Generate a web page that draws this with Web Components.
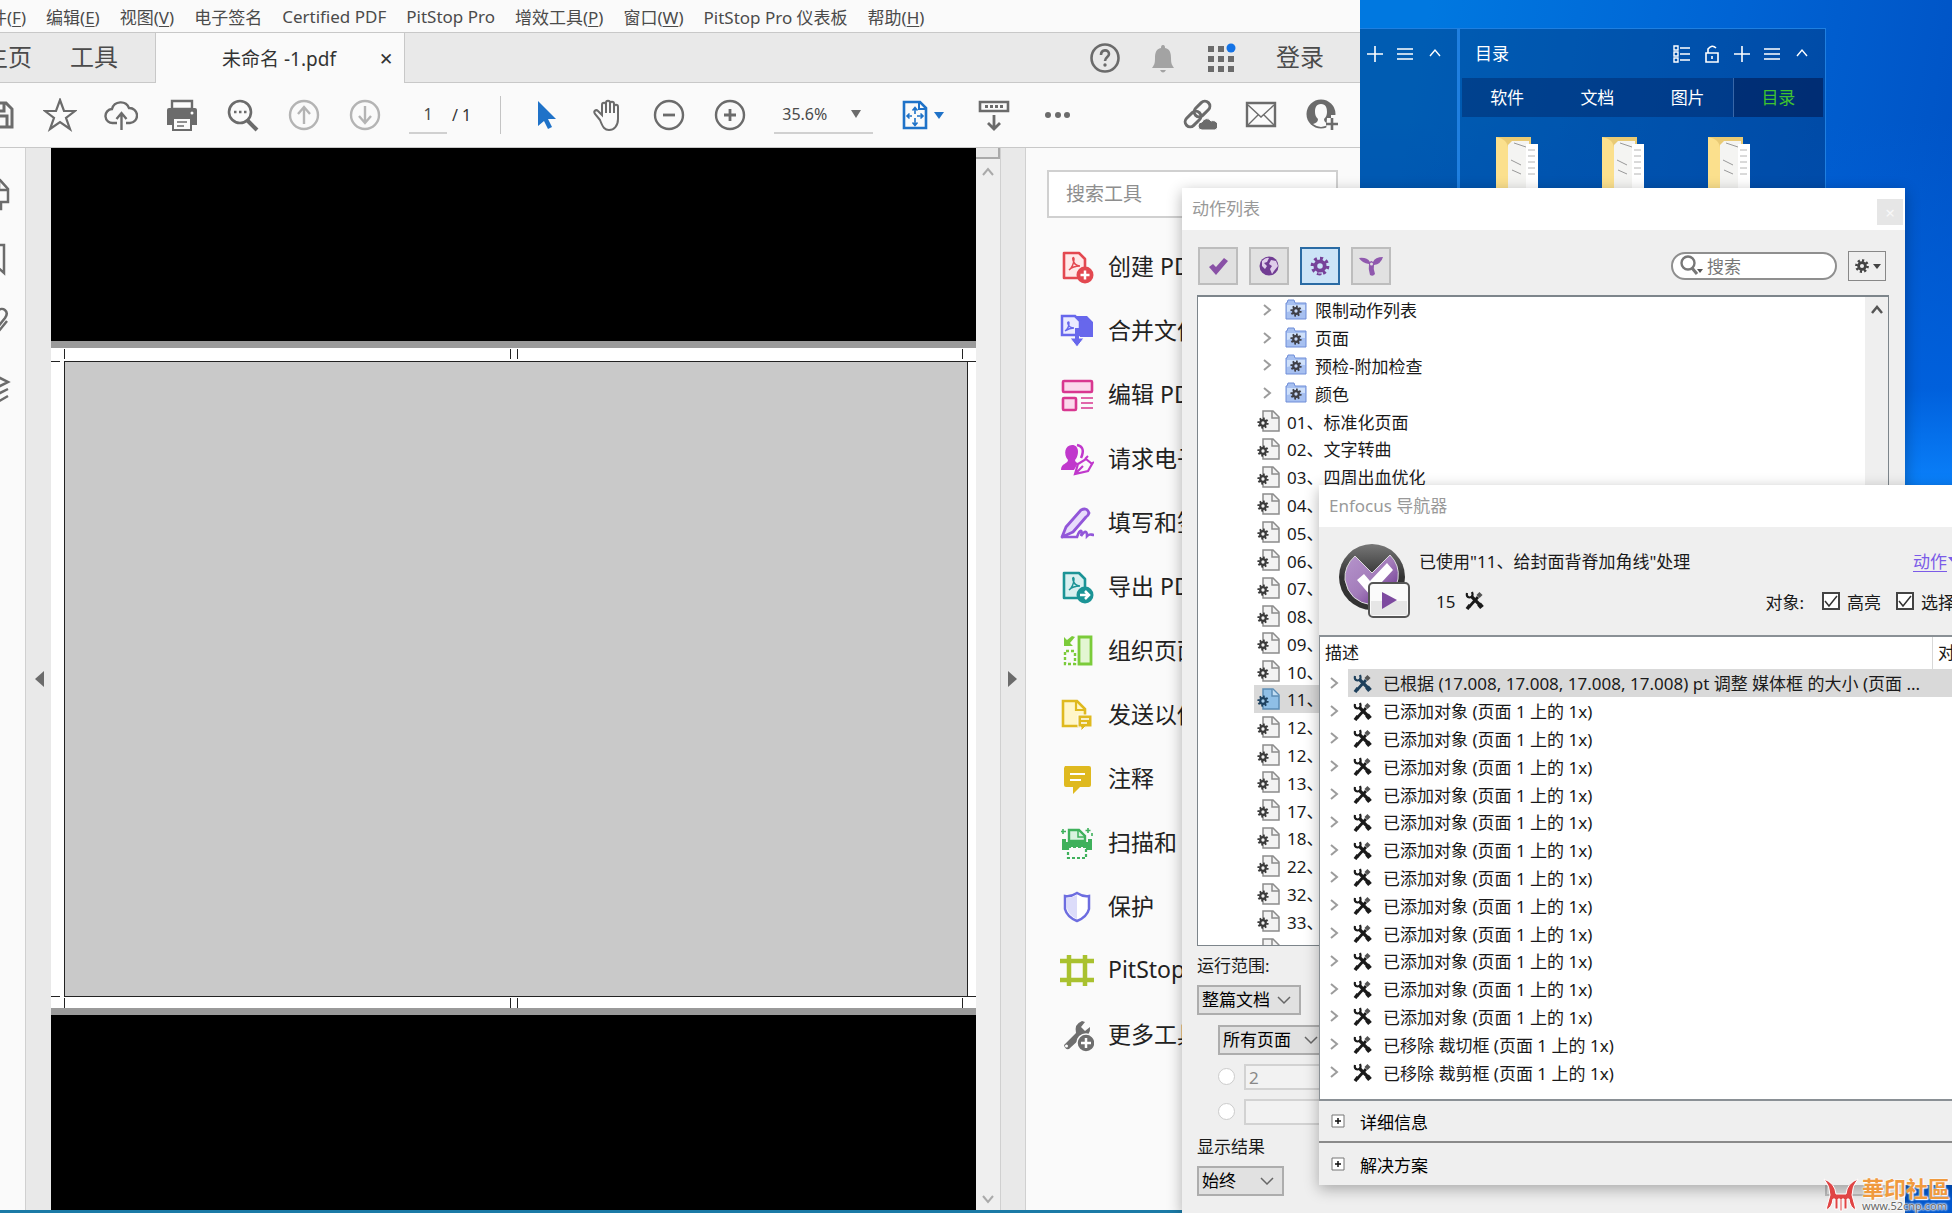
<!DOCTYPE html>
<html lang="zh-CN">
<head>
<meta charset="utf-8">
<title>未命名 -1.pdf</title>
<style>
    html, body {
        margin: 0;
        height: 100%;
        overflow: hidden;
        font-family: "Noto Sans", "Noto Sans CJK SC", sans-serif;
    }
</style>
</head>
<body>
<desk-top>
    <desktop-panel slot="panel"></desktop-panel>
    <acrobat-window slot="main"></acrobat-window>
    <float-window slot="actions">
        <span slot="title">动作列表</span>
        <action-list></action-list>
    </float-window>
    <float-window slot="navigator">
        <span slot="title">Enfocus 导航器</span>
        <enfocus-navigator></enfocus-navigator>
    </float-window>
    <site-mark slot="mark"></site-mark>
</desk-top>

<script>
    // Base: every element renders its template once into an open root
    class BaseElement extends HTMLElement {
        constructor() {
            super();
            this.attachShadow({mode: 'open'});
        }

        connectedCallback() {
            this.shadowRoot.innerHTML = this.render();
        }
    }

    const gear = (x, y, r, color, hole) => `
        <circle cx="${x}" cy="${y}" r="${r}" pathLength="16" fill="none" stroke="${color}" stroke-width="${r * .5}" stroke-dasharray="1 1"/>
        <circle cx="${x}" cy="${y}" r="${r * .62}" fill="${hole}" stroke="${color}" stroke-width="${r * .5}"/>`;

    const acro = color => `<path d="M9 20c3-2 5-7 5-11 0-2-2-2-1 1 1 4 4 6 7 6-4 0-8 1-11 4z" fill="none" stroke="${color}" stroke-width="1.5"/>`;

    // name: [width, height, markup]
    const ICONS = {
        save: [34, 34, '<path d="M4 5h20l6 6v18H4z M10 5v8h12V5 M9 29V18h16v11" fill="none" stroke="#6b6b6b" stroke-width="3"/>'],
        star: [34, 34, '<path d="M17 2l4 11h11l-9 7 4 11-10-7-10 7 4-11-9-7h11z" fill="none" stroke="#6b6b6b" stroke-width="2.2"/>'],
        cloud: [34, 34, '<path d="M13 25H9a7 7 0 0 1-1-14 9 9 0 0 1 17-1 7.500 7.500 0 0 1 1 15h-4" fill="none" stroke="#6b6b6b" stroke-width="2.400"/><path d="M17.500 32V16m-5 5 5-6 5 6" fill="none" stroke="#6b6b6b" stroke-width="2.400"/>'],
        print: [34, 34, '<path d="M7 3h20v8H7z" fill="#fafafa" stroke="#6b6b6b" stroke-width="2.400"/><path d="M2 12q0-2 2-2h26q2 0 2 2v15H2z" fill="#6b6b6b"/><path d="M8 20h18v12H8z" fill="#fafafa" stroke="#6b6b6b" stroke-width="2"/><path d="M12 24h10m-10 4h7" stroke="#6b6b6b" stroke-width="1.500"/><circle cx="27" cy="15" r="1.500" fill="#fff"/>'],
        find: [34, 34, '<circle cx="14" cy="14" r="11" fill="none" stroke="#6b6b6b" stroke-width="2.600"/><path d="M21 22l10 10" stroke="#6b6b6b" stroke-width="4"/><path d="M8 14h2.500m2.500 0h2.500m2.500 0h2.500" stroke="#6b6b6b" stroke-width="2.500"/>'],
        up: [34, 34, '<circle cx="17" cy="17" r="14" fill="none" stroke="#b4b4b4" stroke-width="2.400"/><path d="M17 26V10m-6 6 6-7 6 7" fill="none" stroke="#b4b4b4" stroke-width="2.400"/>'],
        down: [34, 34, '<circle cx="17" cy="17" r="14" fill="none" stroke="#b4b4b4" stroke-width="2.400"/><path d="M17 8v16m-6-6 6 7 6-7" fill="none" stroke="#b4b4b4" stroke-width="2.400"/>'],
        pointer: [34, 34, '<path d="M8 3v25l6-5 4 8 4-2-4-8h8z" fill="#1f72c8"/>'],
        hand: [34, 34, '<path d="M9 22L4 16c-2-3 1-5 3-3l4 4V7c0-3 4-3 4 0V5c0-3 4-3 4 0v1c0-3 4-3 4 0v3c0-3 4-3 4 0v12c0 7-4 11-9 11-4 0-6-2-9-10z M15 7v8m4-9v9m4-7v7" fill="none" stroke="#6b6b6b" stroke-width="2"/>'],
        minus: [34, 34, '<circle cx="17" cy="17" r="14" fill="none" stroke="#6b6b6b" stroke-width="2.400"/><path d="M11 17h12" stroke="#6b6b6b" stroke-width="2.800"/>'],
        plus: [34, 34, '<circle cx="17" cy="17" r="14" fill="none" stroke="#6b6b6b" stroke-width="2.400"/><path d="M11 17h12M17 11v12" stroke="#6b6b6b" stroke-width="2.800"/>'],
        fit: [48, 34, '<path d="M4 4h16l6 6v20H4z" fill="none" stroke="#1f72c8" stroke-width="2.600"/><path d="M19 3v8h8" fill="none" stroke="#1f72c8" stroke-width="2"/><path d="M15 11v5m0 4v6M7 18h5m5 0h6M12.500 12.500 15 9.500l2.500 3M12.500 24.500l2.500 3 2.500-3M9.500 15.500 7 18l2.500 2.500M20.500 15.500 23 18l-2.500 2.500" fill="none" stroke="#1f72c8" stroke-width="1.600"/><path d="M34 14h10l-5 7z" fill="#1f72c8"/>'],
        ruler: [38, 34, '<path d="M5 4h28v9H5z" fill="none" stroke="#6b6b6b" stroke-width="2.600"/><path d="M10 8.500h3m2 0h3m2 0h3m2 0h3" stroke="#6b6b6b" stroke-width="3"/><path d="M19 17v13m-6-5 6 6 6-6" fill="none" stroke="#6b6b6b" stroke-width="2.800"/>'],
        dots: [34, 34, '<g fill="#6b6b6b"><circle cx="8" cy="17" r="3"/><circle cx="18" cy="17" r="3"/><circle cx="27" cy="17" r="3"/></g>'],
        link: [34, 34, '<g fill="none" stroke="#6b6b6b" stroke-width="3"><rect x="10" y="6" width="18" height="10" rx="5" transform="rotate(-45 19 11)"/><rect x="1" y="16" width="18" height="10" rx="5" transform="rotate(-45 10 21)"/></g><path d="M19 32a4 4 0 0 1 0-8 5 5 0 0 1 9-1 4.500 4.500 0 0 1 4 9z" fill="#6b6b6b" stroke="#fafafa"/>'],
        mail: [34, 34, '<path d="M3 5h28v23H3z" fill="none" stroke="#6b6b6b" stroke-width="2.400"/><path d="M4 7l13 12L30 7M4 27l10-10m16 10L20 17" fill="none" stroke="#6b6b6b" stroke-width="1.400"/>'],
        user: [34, 34, '<circle cx="16" cy="16" r="14.500" fill="#6b6b6b"/><path d="M16 6c-5 0-6 4-6 8 0 3 1 5 3 7 0 3-2 4-5 5q8 6 16 0c-3-1-5-2-5-5 2-2 3-4 3-7 0-4-1-8-6-8z" fill="#fafafa"/><path d="M22 20h4v-3h9v17H21z" fill="#fafafa"/><path d="M27 20v12m-6-6h12" stroke="#6b6b6b" stroke-width="2.600"/>'],
        help: [34, 34, '<circle cx="17" cy="17" r="13.500" fill="none" stroke="#6b6b6b" stroke-width="2.600"/><path d="M13 14c0-6 8-6 8-1 0 3-4 3-4 7" fill="none" stroke="#6b6b6b" stroke-width="2.600"/><circle cx="17" cy="24" r="1.700" fill="#6b6b6b"/>'],
        bell: [34, 34, '<path d="M17 4c-2 0-2 2-2 3-5 1-6 5-6 10 0 6-1 7-3 10h22c-2-3-3-4-3-10 0-5-1-9-6-10 0-1 0-3-2-3zM14 29h6q-3 5-6 0z" fill="#a3a3a3"/>'],
        grid: [34, 34, '<g fill="#6b6b6b"><path d="M4 5h6v6H4zM14 5h6v6h-6zM4 15h6v6H4zM14 15h6v6h-6zM24 15h6v6h-6zM4 25h6v6H4zM14 25h6v6h-6zM24 25h6v6h-6z"/></g><circle cx="27" cy="7" r="4.500" fill="#1473e6"/>'],
        pages: [34, 34, '<path d="M5 3h15l8 9v13H21v7H5z" fill="none" stroke="#6b6b6b" stroke-width="2.500"/><path d="M19 3v10h9" fill="none" stroke="#6b6b6b" stroke-width="2.500"/>'],
        bookmark: [34, 34, '<path d="M6 3h18v28l-9-8-9 8z" fill="none" stroke="#6b6b6b" stroke-width="2.500"/>'],
        clip: [34, 34, '<path d="M8 22L18 4c4-5 12 0 7 7L13 26M27 14 14 30" fill="none" stroke="#6b6b6b" stroke-width="2.500"/>'],
        layers: [34, 34, '<path d="M16 4 4 10l12 6 12-6zM28 17l-12 6-12-6M28 24l-12 7-12-7" fill="none" stroke="#6b6b6b" stroke-width="2.500"/>'],
        // right-hand tool list
        create: [34, 34, `<path d="M4 3h15l6 6v19H4z" fill="#ffe9e9" stroke="#e34850" stroke-width="2.600" stroke-linejoin="round"/>${acro('#e34850')}<circle cx="25" cy="25" r="8.500" fill="#e34850"/><path d="M20.500 25h9M25 20.500v9" stroke="#fff" stroke-width="2.500"/>`],
        merge: [34, 34, `<path d="M16 2h11l6 6v15H20V12z" fill="#6767ec"/><path d="M2 2h13l5 5v14H2z" fill="#eaeaff" stroke="#6767ec" stroke-width="2.500"/><path d="M5 17c3-2 4-6 4-8 0-2-2-1-1 1 1 3 4 4 6 4-4 0-6 1-9 3z" fill="none" stroke="#6767ec" stroke-width="1.400"/><path d="M17 15v11m-7-2h14l-7 9z" fill="#6767ec" stroke="#fafafa" stroke-width="1"/><path d="M15 14h4v12h-4z" fill="#6767ec"/>`],
        edit: [34, 34, '<g fill="#fbd8ec" stroke="#d83790" stroke-width="2.600"><rect x="3" y="3" width="29" height="11" rx="1"/><rect x="3" y="20" width="13" height="12" rx="1"/></g><path d="M21 20h12m-12 5h12m-12 5h12" stroke="#d83790" stroke-width="1.400"/>'],
        sign: [34, 34, '<path d="M1 28c0-7 7-6 7-10-5-6-3-15 4-15 8 0 7 11 3 15 0 2 2 3 3 3l-4 7z" fill="#c038cc"/><path d="M17 3q9 2 4 13" fill="none" stroke="#c038cc" stroke-width="2.500"/><path d="M15 32l3-10 8-5 6 5-4 7z M16 31l7-7" fill="#fafafa" stroke="#c038cc" stroke-width="2.200"/><path d="M25 17l3-3m3 8 3-2" stroke="#c038cc" stroke-width="2"/>'],
        fill: [34, 34, '<path d="M2 31l4-10L21 4q6-3 8 3-1 3-3 4L13 26z" fill="#e8dcfb" stroke="#9256d9" stroke-width="2.800" stroke-linejoin="round"/><path d="M2 31h15c3-9 6-7 4-1 4-6 6-5 6 0 3-3 4-1 7-1" fill="none" stroke="#9256d9" stroke-width="2.600"/>'],
        export: [34, 34, `<path d="M4 3h15l6 6v19H4z" fill="#d9f0f0" stroke="#1b9496" stroke-width="2.600" stroke-linejoin="round"/>${acro('#1b9496')}<circle cx="25" cy="25" r="8.500" fill="#1b9496"/><path d="M20 25h9m-4-4 4 4-4 4" fill="none" stroke="#fff" stroke-width="2.500"/>`],
        organize: [34, 34, '<path d="M19 3h12v27H19z" fill="#e3f6d3" stroke="#7bcb3a" stroke-width="2.800"/><path d="M14 17H5v13h10V17" fill="none" stroke="#7bcb3a" stroke-width="2.400" stroke-dasharray="3 2"/><path d="M4 3v9h9L10 9l5-6-3-1-5 4z" fill="#7bcb3a"/>'],
        send: [34, 34, '<path d="M3 3h14l8 8v17H3z" fill="#fff6c8" stroke="#dfb91f" stroke-width="2.600"/><path d="M16 3v9h9" fill="none" stroke="#dfb91f" stroke-width="2.200"/><path d="M18 17h14v12h-7l-4 4v-4h-3z" fill="#dfb91f" stroke="#fafafa"/><path d="M21 21h8m-8 4h6" stroke="#fff" stroke-width="1.500"/>'],
        comment: [34, 34, '<path d="M5 4h24q2 0 2 2v17q0 2-2 2H20l-7 7v-7H6q-2 0-2-2V6z" fill="#dfb91f"/><path d="M10 12h15m-15 6h11" stroke="#fff" stroke-width="2"/>'],
        scan: [34, 34, '<path d="M2 13h4v3h22v-3h4v11H2z" fill="#3fb15c"/><path d="M9 15V4h10l6 6v5z" fill="#d9f3df" stroke="#3fb15c" stroke-width="2.400"/><path d="M18 4v7h7" fill="none" stroke="#3fb15c" stroke-width="1.500"/><path d="M8 21h18v11H8z" fill="#fafafa" stroke="#3fb15c" stroke-width="2.200" stroke-dasharray="3 2"/><path d="M3 3v5M1 5.500h5M28 2v5m-2.500-2.500h5M32 7v3" stroke="#3fb15c" stroke-width="1.600"/>'],
        shield: [34, 34, '<path d="M17 3q6 4 12 3v13q-2 8-12 12Q7 27 5 19V6q6 1 12-3z" fill="#fff" stroke="#6d6de0" stroke-width="2.500"/><path d="M17 5v24Q8 25 7 18V8q5 0 10-3z" fill="#dcdcfa"/>'],
        pitstop: [34, 34, '<path d="M9 1v31M25 1v31M0 7h34M0 26h34" stroke="#a9c12f" stroke-width="4.500"/>'],
        more: [34, 34, '<path d="M4 27 16 15q-2-9 6-12l3 1-4 5 4 4 5-4q1 9-8 10L9 31q-4 1-5-4z" fill="#6e6e6e"/><circle cx="6.500" cy="28" r="1.500" fill="#fff"/><circle cx="26" cy="25" r="9" fill="#6e6e6e" stroke="#fafafa" stroke-width="1.500"/><path d="M21 25h10M26 20v10" stroke="#fff" stroke-width="2.500"/>'],
        // PitStop windows
        check: [22, 22, '<path d="M2 12l4-3 3 3 8-9 4 3L9 20z" fill="#8951a6"/>'],
        globe: [22, 22, '<circle cx="11" cy="11" r="9.500" fill="#713c93"/><path d="M4 6q4-4 7-3l-2 4-3 1 3 3-2 3-3-3zM13 5l5 1 2 5-4 5-2 3-2-5 2-3-3-2z" fill="#dfcdea"/>'],
        cog: [22, 22, gear(11, 11, 7.5, '#77429a', '#cce4f7')],
        fan: [26, 22, '<path d="M11 9Q4 8 1 3q8-1 11 4 1-2 3 0 2-5 10-5-2 7-9 8-1 4 1 9-2 3-5 1-2-6-1-11z" fill="#9059ae"/><circle cx="13.500" cy="9" r="1.500" fill="#e1e1e1"/>'],
        smallgear: [16, 16, gear(8, 8, 5.5, '#444', '#efefef')],
        lens: [24, 24, '<circle cx="9" cy="9" r="6.500" fill="none" stroke="#777" stroke-width="2.400"/><path d="M13 14l5 6" stroke="#777" stroke-width="3"/><path d="M18 15h6l-3 4z" fill="#555"/>'],
        folder: [22, 22, `<path d="M1 4h1l1-3h6l1 3h11v16H1z" fill="#a7c0f0" stroke="#6f8dd8"/><path d="M2 6h18v5q-8-1-18 2z" fill="#cfe0fa"/>${gear(11, 12, 4.5, '#3f3f46', '#c5d6f6')}`],
        file: [24, 24, `<path d="M6 2h10l6 6v14H6z" fill="#f3f3f3" stroke="#8c8c8c" stroke-width="1.500"/><path d="M15 2v7h7" fill="none" stroke="#8c8c8c" stroke-width="1.500"/>${gear(6, 14, 4.5, '#3a3a3a', '#eee')}`],
        fileOn: [24, 24, `<path d="M6 2h10l6 6v14H6z" fill="#8fbfe6" stroke="#5c8db5" stroke-width="1.500"/><path d="M15 2v7h7" fill="#c2def4" stroke="#5c8db5" stroke-width="1.500"/>${gear(6, 14, 4.5, '#1d415f', '#a9cdea')}`],
        chevron: [12, 16, '<path d="M3 3l6 5-6 5" fill="none" stroke="#9c9c9c" stroke-width="2"/>'],
        tools: [20, 20, '<g stroke="currentColor" fill="none"><path d="M16 3.500l-3 3" stroke-width="4.500" stroke="#555"/><path d="M13 7L4 17" stroke-width="2.800"/><path d="M5 15l-3 4" stroke-width="3.500"/><path d="M6 6l9 9" stroke-width="3.200"/><path d="M14 14l3 3.500" stroke-width="4.800"/><path d="M2 3q-1 4 2.500 4.500Q9 7 7 2" stroke-width="2.200"/></g>'],
        list: [18, 18, '<path d="M1 1h4v4H1zM1 7h4v4H1zM1 13h4v4H1zM7 3h10M7 9h10M7 15h10" fill="none" stroke="#fff" stroke-width="1.400"/>'],
        lock: [18, 18, '<path d="M3 8h12v9H3zM5 8V4q4-5 8-1M9 11v3" fill="none" stroke="#fff" stroke-width="1.600"/>'],
        add: [18, 18, '<path d="M1 9h16M9 1v16" stroke="#fff" stroke-width="1.600"/>'],
        lines: [18, 18, '<path d="M1 4h16M1 9h16M1 14h16" stroke="#fff" stroke-width="1.600"/>'],
        caret: [18, 18, '<path d="M4 11l5-6 5 6" fill="none" stroke="#fff" stroke-width="1.400"/>'],
        docs: [46, 60, '<path d="M2 1h35v59H2z" fill="#e9ca74"/><path d="M14 9l4-4h17v55H14z" fill="#f4f4f2"/><path d="M32 8h12v52H32z" fill="#fff"/><path d="M34 14h7m-7 6h7m-7 6h7m-7 6h7m-7 6h7" stroke="#b4b4b4"/><path d="M17 24l10 5m-9 5 9 4m-7-31 12 4" stroke="#999"/><path d="M2 1q12 2 12 12v47Q8 58 2 53z" fill="#fbe08d"/>'],
        navigator: [72, 76, `
            <defs>
                <linearGradient id="ring" x2="0" y2="1"><stop offset="0" stop-color="#777"/><stop offset=".5" stop-color="#333"/></linearGradient>
                <linearGradient id="violet" x2="1" y2="1"><stop offset="0" stop-color="#b695cc"/><stop offset=".5" stop-color="#a37cba"/><stop offset="1" stop-color="#5e2286"/></linearGradient>
            </defs>
            <circle cx="34" cy="34" r="33" fill="url(#ring)"/>
            <path d="M17 13l17 17 18-18q10 10 8 24-3 21-26 26Q11 59 7 37 6 23 17 13z" fill="url(#violet)" stroke="#ddd"/>
            <path d="M19 37l7-6 6 7 17-18 6 7-23 25z" fill="#fff"/>
            <rect x="31" y="40" width="40" height="34" rx="4" fill="#fafafa" stroke="#555" stroke-width="2"/>
            <path d="M33 58h36v14H33z" fill="#e6e6e6"/>
            <path d="M44 49l15 8-15 9z" fill="#7d4a9f"/>`],
        logo: [36, 36, '<path d="M1 2q11 4 12 15h10Q24 6 35 2q-6 7-6 16l4 15q-6-2-7-11h-2v10h-3V22h-2v12h-2V22h-2v10h-3V22h-2q-1 9-7 11l4-15Q7 9 1 2z" fill="#e04545" stroke="#fff"/>']
    };

    class UiIcon extends BaseElement {
        render() {
            const [w, h, body] = ICONS[this.getAttribute('name')];
            return /* html */ `
                <style>
                    :host { display: block; flex: none; width: ${w}px; height: ${h}px; }
                    svg { display: block; }
                </style>
                <svg width="${w}" height="${h}" viewBox="0 0 ${w} ${h}" aria-hidden="true">${body}</svg>
            `;
        }
    }

    class DeskTop extends BaseElement {
        render() {
            return /* html */ `
                <style>
                    :host {
                        display: block;
                        position: relative;
                        height: 100vh;
                        overflow: hidden;
                        background: linear-gradient(to bottom, transparent 10%, #0060dc 32%, #0a80fa 40%, #0058d0 90%),
                            linear-gradient(100deg, #0078e0 66%, #0064d4 80%, #0048bc);
                    }
                    ::slotted(*) { position: absolute; }
                    ::slotted([slot=panel]) { top: 28px; right: 126px; }
                    ::slotted([slot=main]) { top: 0; left: -32px; right: 592px; bottom: 3px; }
                    ::slotted([slot=actions]) { top: 188px; right: 47px; bottom: 0; width: 723px; }
                    ::slotted([slot=navigator]) { top: 485px; right: -40px; bottom: 28px; width: 673px; }
                    ::slotted([slot=mark]) { right: 2px; bottom: 0; }
                    .taskbar { position: absolute; left: 0; right: 592px; bottom: 0; height: 3px; background: #1b7aa6; }
                </style>
                <slot name="panel"></slot>
                <div class="taskbar"></div>
                <slot name="main"></slot>
                <slot name="actions"></slot>
                <slot name="navigator"></slot>
                <slot name="mark"></slot>
            `;
        }
    }

    class DesktopPanel extends BaseElement {
        render() {
            const tool = name => `<button aria-label="${name}"><ui-icon name="${name}"></ui-icon></button>`;
            return /* html */ `
                <style>
                    :host { display: flex; color: #fff; font-size: 17px; }
                    section {
                        box-sizing: border-box;
                        height: 300px;
                        border: 1px solid #1f7fe0;
                        background: rgba(0, 50, 110, .4);
                    }
                    .side { width: 140px; border-right-width: 2px; }
                    .main { width: 367px; padding: 0 2px; }
                    header { display: flex; align-items: center; gap: 12px; height: 49px; padding: 0 13px; }
                    .side header { justify-content: flex-end; }
                    .main header { padding-right: 12px; }
                    h2 { margin: 0 auto 0 0; padding-bottom: 3px; font-size: 17px; font-weight: 400; }
                    button { padding: 0; border: 0; background: none; color: inherit; font: inherit; }
                    nav { display: grid; grid-template-columns: repeat(4, 1fr); height: 39px; background: rgba(0, 30, 90, .4); }
                    nav button { padding-bottom: 3px; }
                    nav button[aria-current] { border-left: 1px solid #3867a8; background: rgba(0, 20, 70, .3); color: #3fc32f; }
                    .files { display: flex; gap: 60px; padding: 19px 32px; }
                </style>
                <section class="side"><header>${['add', 'lines', 'caret'].map(tool).join('')}</header></section>
                <section class="main">
                    <header><h2>目录</h2>${['list', 'lock', 'add', 'lines', 'caret'].map(tool).join('')}</header>
                    <nav><button>软件</button><button>文档</button><button>图片</button><button aria-current="page">目录</button></nav>
                    <div class="files">${'<ui-icon name="docs"></ui-icon>'.repeat(3)}</div>
                </section>
            `;
        }
    }

    class AcrobatWindow extends BaseElement {
        render() {
            return /* html */ `
                <style>
                    :host { display: flex; flex-direction: column; background: #fafafa; color: #4b4b4b; }
                    .work { flex: 1; min-height: 0; display: flex; }
                    doc-view { flex: 1; }
                </style>
                <menu-bar></menu-bar>
                <tab-bar></tab-bar>
                <tool-bar></tool-bar>
                <div class="work">
                    <side-rail></side-rail>
                    <doc-view></doc-view>
                    <tools-pane></tools-pane>
                </div>
            `;
        }
    }

    class MenuBar extends BaseElement {
        render() {
            const items = ['文件(<u>F</u>)', '编辑(<u>E</u>)', '视图(<u>V</u>)', '电子签名', 'Certified PDF', 'PitStop Pro',
                '增效工具(<u>P</u>)', '窗口(<u>W</u>)', 'PitStop Pro 仪表板', '帮助(<u>H</u>)'];
            return /* html */ `
                <style>
                    :host { display: flex; gap: 20px; height: 32px; padding-left: 5px; box-sizing: border-box; font-size: 17px; }
                    button { padding: 0; border: 0; background: none; color: inherit; font: inherit; white-space: nowrap; }
                    u { text-underline-offset: 2px; }
                </style>
                ${items.map(item => `<button>${item}</button>`).join('')}
            `;
        }
    }

    class TabBar extends BaseElement {
        render() {
            return /* html */ `
                <style>
                    :host { display: flex; height: 51px; box-sizing: border-box; border-top: 1px solid #c8c8c8; background: #e9e9e9; font-size: 24px; }
                    button { padding: 0; border: 0; background: none; color: inherit; font: inherit; }
                    .home { display: flex; gap: 38px; width: 187px; padding: 0 0 4px 16px; box-sizing: border-box; border-bottom: 1px solid #c8c8c8; }
                    .tab {
                        display: flex;
                        align-items: center;
                        width: 250px;
                        padding: 0 11px 0 66px;
                        box-sizing: border-box;
                        justify-content: space-between;
                        border: solid #c8c8c8;
                        border-width: 0 1px;
                        background: #fafafa;
                        color: #333;
                        font-size: 19px;
                    }
                    .tab button { font-size: 17px; }
                    .right { flex: 1; display: flex; align-items: center; justify-content: flex-end; gap: 24px; padding-right: 36px; border-bottom: 1px solid #c8c8c8; }
                    .login { padding: 0 0 4px 14px; }
                </style>
                <div class="home"><button>主页</button><button>工具</button></div>
                <div class="tab"><span>未命名 -1.pdf</span><button aria-label="关闭">✕</button></div>
                <div class="right">
                    <button aria-label="帮助"><ui-icon name="help"></ui-icon></button>
                    <button aria-label="通知"><ui-icon name="bell"></ui-icon></button>
                    <button aria-label="应用"><ui-icon name="grid"></ui-icon></button>
                    <button class="login">登录</button>
                </div>
            `;
        }
    }

    class ToolBar extends BaseElement {
        render() {
            const tool = name => `<button aria-label="${name}"><ui-icon name="${name}"></ui-icon></button>`;
            return /* html */ `
                <style>
                    :host {
                        display: flex;
                        align-items: center;
                        gap: 27px;
                        height: 65px;
                        padding: 0 21px 0 14px;
                        box-sizing: border-box;
                        border-bottom: 1px solid #c8c8c8;
                        font-size: 16px;
                    }
                    button { flex: none; padding: 0; border: 0; background: none; }
                    .page { display: flex; align-items: center; gap: 5px; color: #333; }
                    input {
                        width: 38px;
                        height: 38px;
                        padding: 0;
                        box-sizing: border-box;
                        border: 0;
                        border-bottom: 2px solid #d0d0d0;
                        background: none;
                        color: #4b4b4b;
                        font: inherit;
                        text-align: center;
                    }
                    hr { width: 1px; height: 38px; margin: 0 2px; border: 0; background: #c4c4c4; }
                    .zoom { display: grid; grid-template-columns: 1fr 24px; align-items: center; width: 99px; border-bottom: 2px solid #d0d0d0; }
                    .zoom * { grid-row: 1; }
                    select { grid-column: 1 / 3; height: 36px; padding: 0 0 0 8px; border: 0; background: none; color: #4b4b4b; font: inherit; appearance: none; }
                    .zoom svg { grid-column: 2; pointer-events: none; }
                    .end { margin-left: auto; display: flex; gap: 27px; }
                </style>
                ${['save', 'star', 'cloud', 'print', 'find', 'up', 'down'].map(tool).join('')}
                <div class="page"><input value="1" aria-label="页码"><span>/ 1</span></div>
                <hr>
                ${['pointer', 'hand', 'minus', 'plus'].map(tool).join('')}
                <div class="zoom">
                    <select aria-label="缩放"><option>35.6%</option></select>
                    <svg width="14" height="8"><path d="M2 0h10L7 8z" fill="#6b6b6b"/></svg>
                </div>
                ${['fit', 'ruler', 'dots'].map(tool).join('')}
                <div class="end">${['link', 'mail', 'user'].map(tool).join('')}</div>
            `;
        }
    }

    class SideRail extends BaseElement {
        render() {
            return /* html */ `
                <style>
                    :host { display: flex; }
                    nav { display: flex; flex-direction: column; gap: 31px; width: 58px; padding: 29px 0 0 12px; box-sizing: border-box; border-right: 1px solid #d0d0d0; }
                    button { padding: 0; border: 0; background: none; }
                    .grip { display: grid; place-items: center; width: 25px; background: #e9e9e9; }
                </style>
                <nav>
                    <button aria-label="页面缩略图"><ui-icon name="pages"></ui-icon></button>
                    <button aria-label="书签"><ui-icon name="bookmark"></ui-icon></button>
                    <button aria-label="附件"><ui-icon name="clip"></ui-icon></button>
                    <button aria-label="图层"><ui-icon name="layers"></ui-icon></button>
                </nav>
                <button class="grip" aria-label="展开导览"><svg width="10" height="16"><path d="M10 0v16L1 8z" fill="#6b6b6b"/></svg></button>
            `;
        }
    }

    class DocView extends BaseElement {
        render() {
            return /* html */ `
                <style>
                    :host { display: flex; min-width: 0; }
                    .canvas { flex: 1; display: flex; flex-direction: column; background: #000; }
                    .sheet {
                        flex: 1;
                        position: relative;
                        margin: 193px 0 195px;
                        padding: 13px 8px 11px 13px;
                        border: solid #9a9a9a;
                        border-width: 7px 0;
                        background: #fff;
                    }
                    .art { height: 100%; box-sizing: border-box; border: 1px solid #222; background: #c9c9c9; }
                    /* crop marks around the trimmed page and the spine */
                    i { position: absolute; background: #222; }
                    .v { width: 1px; height: 10px; }
                    .h { height: 1px; width: 9px; }
                    .t { top: 1px; }
                    .b { bottom: 0; }
                    .l { left: 13px; }
                    .c1 { left: calc(50% - 4px); }
                    .c2 { left: calc(50% + 3px); }
                    .r { right: 13px; }
                    .tl { left: 0; top: 13px; }
                    .tr { right: 0; top: 13px; }
                    .bl { left: 0; bottom: 11px; }
                    .br { right: 0; bottom: 11px; }
                    .scroll { display: flex; flex-direction: column; align-items: center; justify-content: space-between; width: 24px; background: #efefef; }
                    .scroll::before { content: ""; width: 100%; height: 11px; box-sizing: border-box; border: solid #aaa; border-width: 0 2px 2px 0; background: #e9e9e9; }
                    .scroll svg:last-child { margin: auto 0 6px; }
                    .scroll svg { margin-top: 8px; }
                </style>
                <div class="canvas">
                    <div class="sheet">
                        <div class="art"></div>
                        ${['t', 'b'].map(y => ['l', 'c1', 'c2', 'r'].map(x => `<i class="v ${y} ${x}"></i>`).join('')).join('')}
                        ${['tl', 'tr', 'bl', 'br'].map(c => `<i class="h ${c}"></i>`).join('')}
                    </div>
                </div>
                <div class="scroll">
                    <svg width="12" height="10"><path d="M1 8l5-6 5 6" fill="none" stroke="#aaa" stroke-width="2"/></svg>
                    <svg width="12" height="10"><path d="M1 2l5 6 5-6" fill="none" stroke="#aaa" stroke-width="2"/></svg>
                </div>
            `;
        }
    }

    class ToolsPane extends BaseElement {
        render() {
            const tools = [['create', '创建 PDF'], ['merge', '合并文件'], ['edit', '编辑 PDF'], ['sign', '请求电子签名'],
                ['fill', '填写和签名'], ['export', '导出 PDF'], ['organize', '组织页面'], ['send', '发送以供注释'], ['comment', '注释'],
                ['scan', '扫描和 OCR'], ['shield', '保护'], ['pitstop', 'PitStop Pro'], ['more', '更多工具']];
            return /* html */ `
                <style>
                    :host { display: flex; width: 360px; color: #222; }
                    button { padding: 0; border: 0; background: none; color: inherit; font: inherit; }
                    .grip { display: grid; place-items: center; width: 26px; box-sizing: border-box; border: solid #d0d0d0; border-width: 0 1px; background: #e9e9e9; }
                    .pane { flex: 1; padding: 22px 22px 0 21px; }
                    input { width: 100%; height: 48px; padding: 0 17px; box-sizing: border-box; border: 2px solid #d0d0d0; background: #fff; font: inherit; font-size: 19px; }
                    input::placeholder { color: #8e8e8e; }
                    ul { margin: 17px 0 0; padding: 0; list-style: none; }
                    li button { display: flex; align-items: center; gap: 14px; height: 64px; padding-left: 13px; font-size: 23px; white-space: nowrap; }
                    li span { padding-bottom: 4px; }
                </style>
                <button class="grip" aria-label="收起工具"><svg width="10" height="16"><path d="M0 0v16l9-8z" fill="#6b6b6b"/></svg></button>
                <div class="pane">
                    <input type="search" placeholder="搜索工具" aria-label="搜索工具">
                    <ul>${tools.map(([icon, text]) => `<li><button><ui-icon name="${icon}"></ui-icon><span>${text}</span></button></li>`).join('')}</ul>
                </div>
            `;
        }
    }

    class FloatWindow extends BaseElement {
        render() {
            return /* html */ `
                <style>
                    :host { display: flex; flex-direction: column; background: #efefef; box-shadow: 0 4px 14px rgba(0, 0, 0, .3); color: #1a1a1a; font-size: 17px; }
                    header { display: flex; align-items: center; justify-content: space-between; height: 42px; padding: 0 2px 0 10px; background: #fff; color: #999; }
                    header ::slotted(span) { padding-bottom: 3px; }
                    header button { width: 26px; height: 26px; margin-top: 6px; padding: 0; border: 0; background: #e6e6e6; color: #f8f8f8; font: inherit; }
                    ::slotted(:not([slot])) { flex: 1; min-height: 0; }
                </style>
                <header><slot name="title"></slot><button aria-label="关闭">×</button></header>
                <slot></slot>
            `;
        }
    }

    class ActionList extends BaseElement {
        render() {
            const folders = ['限制动作列表', '页面', '预检-附加检查', '颜色'];
            const files = ['01、标准化页面', '02、文字转曲', '03、四周出血优化', '04、', '05、', '06、', '07、', '08、', '09、', '10、', '11、',
                '12、', '12、', '13、', '17、', '18、', '22、', '32、', '33、', '34、'];
            const drop = (text, label, cls) => `
                <span class="drop ${cls}">
                    <select aria-label="${label}"><option>${text}</option></select>
                    <svg width="14" height="10"><path d="M1 2l6 6 6-6" fill="none" stroke="#666" stroke-width="1.500"/></svg>
                </span>`;
            return /* html */ `
                <style>
                    :host { display: flex; flex-direction: column; padding: 17px 16px 17px 15px; }
                    button { display: grid; place-items: center; padding: 0; border: 2px solid #bdbdbd; background: #e1e1e1; }
                    .bar { display: flex; align-items: center; gap: 11px; height: 38px; margin-bottom: 10px; padding: 0 3px 0 1px; }
                    .bar .mode { width: 40px; height: 38px; }
                    .bar [aria-pressed=true] { border-color: #2a6ba4; background: #cce4f7; }
                    .search { display: flex; align-items: center; gap: 4px; width: 166px; height: 28px; margin-left: auto; padding-left: 6px; box-sizing: border-box; border: 2px solid #8f8f8f; border-radius: 14px; background: #fff; }
                    .search input { width: 100px; padding: 0; border: 0; background: none; font: inherit; outline: 0; }
                    .search input::placeholder { color: #777; }
                    .menu { display: flex; align-items: center; justify-content: center; gap: 3px; width: 38px; height: 30px; border: 1px solid #888; background: #efefef; }
                    .tree { flex: 1; min-height: 0; display: flex; overflow: hidden; border: 1px solid #7d858b; border-top-width: 2px; background: #fff; }
                    ul { flex: 1; display: grid; grid-auto-rows: 1fr; height: 667px; margin: -1px 0 0; padding: 0 0 0 56px; list-style: none; }
                    li { display: flex; align-items: center; padding-left: 3px; gap: 6px; }
                    li.folder { padding-left: 7px; gap: 8px; }
                    li.folder ui-icon + ui-icon { margin-left: 4px; }
                    li.on { background: #d9d9d9; }
                    .scroll { width: 23px; padding-top: 7px; box-sizing: border-box; background: #efefef; text-align: center; line-height: 0; }
                    .opts { display: grid; grid-template: 26px 36px 49px 35px 35px 32px 30px / 21px 26px 1fr auto; align-items: start; padding-top: 7px; }
                    .label { grid-column: 1 / 4; line-height: 26px; }
                    .drop { display: grid; grid-template-columns: 1fr 22px; align-items: center; height: 30px; box-sizing: border-box; border: 2px solid #adadad; background: #e1e1e1; }
                    .drop * { grid-row: 1; }
                    .drop select { grid-column: 1 / 3; height: 26px; padding: 0 0 0 3px; border: 0; background: none; font: inherit; line-height: 26px; appearance: none; }
                    .drop svg { grid-column: 2; pointer-events: none; }
                    .doc { grid-column: 1 / 4; width: 104px; margin-top: 6px; }
                    .pages { grid-column: 2 / 4; width: 110px; margin-top: 10px; }
                    .show { grid-column: 1 / 4; width: 87px; }
                    .opts input[type=radio] { grid-column: 2; width: 17px; height: 17px; margin: 4px 0; appearance: none; border: 1px solid #ccc; border-radius: 50%; background: #fff; }
                    .opts input[type=text] { grid-column: 3; width: 240px; height: 26px; padding: 0 3px; box-sizing: border-box; border: 2px solid #d2d2d2; background: #f2f2f2; color: #888; font: inherit; }
                    .run { grid-column: 4; width: 64px; height: 30px; }
                </style>
                <div class="bar">
                    <button class="mode" aria-label="检查"><ui-icon name="check"></ui-icon></button>
                    <button class="mode" aria-label="全局更改"><ui-icon name="globe"></ui-icon></button>
                    <button class="mode" aria-label="动作" aria-pressed="true"><ui-icon name="cog"></ui-icon></button>
                    <button class="mode" aria-label="快速运行"><ui-icon name="fan"></ui-icon></button>
                    <label class="search"><ui-icon name="lens"></ui-icon><input placeholder="搜索" aria-label="搜索"></label>
                    <button class="menu" aria-label="选项"><ui-icon name="smallgear"></ui-icon><svg width="8" height="5"><path d="M0 0h8L4 5z" fill="#444"/></svg></button>
                </div>
                <div class="tree">
                    <ul>
                        ${folders.map(t => `<li class="folder"><ui-icon name="chevron"></ui-icon><ui-icon name="folder"></ui-icon>${t}</li>`).join('')}
                        ${files.map(t => `<li class="${t === '11、' ? 'on' : ''}"><ui-icon name="${t === '11、' ? 'fileOn' : 'file'}"></ui-icon>${t}</li>`).join('')}
                    </ul>
                    <div class="scroll"><svg width="14" height="10"><path d="M2 9l5-6 5 6" fill="none" stroke="#555" stroke-width="2.500"/></svg></div>
                </div>
                <div class="opts">
                    <div class="label">运行范围:</div>
                    ${drop('整篇文档', '运行范围', 'doc')}
                    ${drop('所有页面', '页面', 'pages')}
                    <input type="radio" name="range" aria-label="页码范围"><input type="text" value="2" aria-label="页码">
                    <input type="radio" name="range" aria-label="自定义范围"><input type="text" aria-label="自定义">
                    <div class="label">显示结果</div>
                    ${drop('始终', '显示结果', 'show')}
                    <button class="run" aria-label="运行"></button>
                </div>
            `;
        }
    }

    class EnfocusNavigator extends BaseElement {
        render() {
            const rows = ['已根据 (17.008, 17.008, 17.008, 17.008) pt 调整 媒体框 的大小 (页面 ...',
                ...Array(12).fill('已添加对象 (页面 1 上的 1x)'), '已移除 裁切框 (页面 1 上的 1x)', '已移除 裁剪框 (页面 1 上的 1x)'];
            const check = text => `<label><input type="checkbox" checked><svg width="18" height="18"><path d="M3 9l4 5 8-10" fill="none" stroke="#333" stroke-width="1.500"/></svg>${text}</label>`;
            return /* html */ `
                <style>
                    :host { display: flex; flex-direction: column; overflow: hidden; }
                    .head { display: flex; gap: 9px; height: 108px; padding: 16px 0 0 19px; box-sizing: border-box; }
                    .info { flex: 1; display: grid; grid-template-rows: 34px 48px; align-items: center; }
                    .row { display: flex; align-items: center; }
                    .count { display: flex; gap: 10px; padding-left: 17px; }
                    a { color: #7b5be8; text-underline-offset: 3px; }
                    .row a { display: flex; align-items: center; margin-left: auto; width: 79px; }
                    .objects { display: flex; align-items: center; gap: 15px; margin-left: auto; margin-right: 37px; }
                    .objects span { padding-right: 3px; }
                    label { display: grid; grid-template-columns: 18px auto; align-items: center; column-gap: 7px; }
                    label input { grid-area: 1 / 1; width: 18px; height: 18px; margin: 0; appearance: none; box-sizing: border-box; border: 2px solid #444; background: #fff; }
                    label svg { grid-area: 1 / 1; pointer-events: none; }
                    table { flex: 1; display: block; border: 1px solid #8a9095; border-width: 2px 0 2px 1px; background: #fff; }
                    thead, th, td { display: block; padding: 0; font-weight: 400; text-align: left; }
                    tr { display: grid; grid-template-columns: 612px 1fr; align-items: center; white-space: nowrap; }
                    thead tr { height: 32px; }
                    th { padding-left: 5px; line-height: 32px; }
                    th + th { border-left: 1px solid #d8d8d8; }
                    tbody { display: grid; grid-auto-rows: 1fr; height: 417px; }
                    tbody tr { grid-template-columns: 28px 1fr; }
                    tbody tr > * { display: flex; align-items: center; height: 100%; }
                    td:first-child { padding-left: 8px; }
                    td:last-child { gap: 10px; padding-left: 5px; }
                    .on td:last-child { background: #d9d9d9; }
                    .on td:last-child ui-icon { color: #1e405c; }
                    .more { display: flex; align-items: center; gap: 15px; height: 40px; padding: 0 12px; border: 0; background: none; font: inherit; }
                    .more + .more { height: 44px; border-top: 2px solid #8a8a8a; }
                    .more svg { flex: none; }
                </style>
                <div class="head">
                    <ui-icon name="navigator"></ui-icon>
                    <div class="info">
                        <div class="row"><span>已使用"11、给封面背脊加角线"处理</span><a href="#">动作<svg width="10" height="8"><path d="M1 1h9L6 7z" fill="#7b5be8"/></svg></a></div>
                        <div class="row">
                            <span class="count">15<ui-icon name="tools"></ui-icon></span>
                            <div class="objects"><span>对象:</span>${check('高亮')}${check('选择')}</div>
                        </div>
                    </div>
                </div>
                <table>
                    <thead><tr><th>描述</th><th>对象</th></tr></thead>
                    <tbody>${rows.map((t, i) => `<tr class="${i ? '' : 'on'}"><td><ui-icon name="chevron"></ui-icon></td><td><ui-icon name="tools"></ui-icon>${t}</td></tr>`).join('')}</tbody>
                </table>
                ${['详细信息', '解决方案'].map(t => `<button class="more"><svg width="14" height="14"><path d="M1 1h12v12H1z" fill="#fff" stroke="#777"/><path d="M4 7h6M7 4v6" stroke="#111" stroke-width="1.500"/></svg>${t}</button>`).join('')}
            `;
        }
    }

    class SiteMark extends BaseElement {
        render() {
            return /* html */ `
                <style>
                    :host { display: flex; align-items: center; gap: 3px; }
                    div { display: flex; flex-direction: column; }
                    b { color: #f09a3e; font-size: 22px; line-height: 22px; text-shadow: 0 0 2px #fff, 0 0 2px #fff, 1px 1px 1px #fff; }
                    span { color: #666; font-size: 11px; line-height: 14px; text-shadow: 0 0 1px #fff, 0 0 2px #fff, 0 0 2px #fff, 0 0 3px #fff; }
                </style>
                <ui-icon name="logo"></ui-icon>
                <div><b>華印社區</b><span>www.52cnp.com</span></div>
            `;
        }
    }

    customElements.define('ui-icon', UiIcon);
    customElements.define('desk-top', DeskTop);
    customElements.define('desktop-panel', DesktopPanel);
    customElements.define('menu-bar', MenuBar);
    customElements.define('tab-bar', TabBar);
    customElements.define('tool-bar', ToolBar);
    customElements.define('side-rail', SideRail);
    customElements.define('doc-view', DocView);
    customElements.define('tools-pane', ToolsPane);
    customElements.define('acrobat-window', AcrobatWindow);
    customElements.define('float-window', FloatWindow);
    customElements.define('action-list', ActionList);
    customElements.define('enfocus-navigator', EnfocusNavigator);
    customElements.define('site-mark', SiteMark);
</script>
</body>
</html>
